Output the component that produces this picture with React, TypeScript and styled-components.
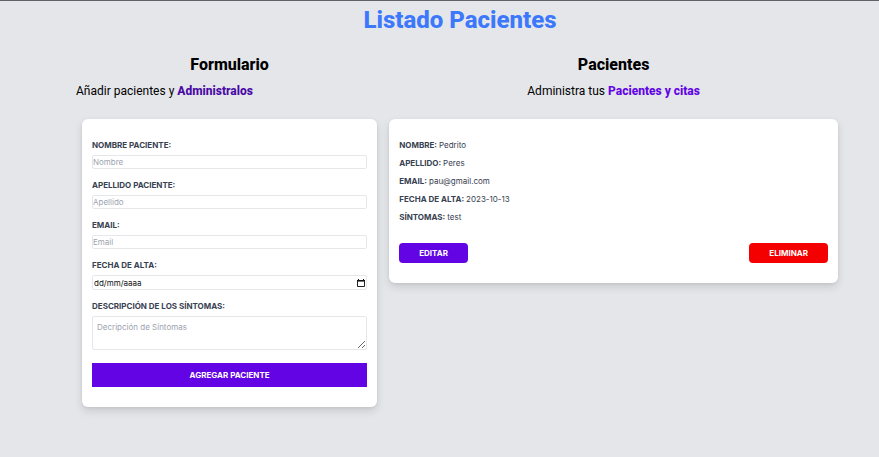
import React from "react";
import styled, { createGlobalStyle } from "styled-components";

const violet = "#6204e4";

const GlobalStyle = createGlobalStyle`
  *, *::before, *::after { box-sizing: border-box; }
  body {
    margin: 0;
    background: #e5e6ea;
    color: #000;
    font-family: Inter, "Liberation Sans", sans-serif;
    font-size: 8px;
    line-height: 12px;
  }
  h1, h2, p, dl, dd { margin: 0; }
  button, input, textarea { font: inherit; color: inherit; }
`;

const Page = styled.div`
  min-height: 100vh;
  border-top: 1px solid #5f6068;
  padding: 4px 0 48px 41px;
`;

const Container = styled.div`
  max-width: 768px;
  margin: 0 auto;
`;

const Title = styled.h1`
  font-family: Roboto, sans-serif;
  font-size: 24px;
  line-height: 30px;
  font-weight: 800;
  text-align: center;
  color: #3c78fb;
`;

const Columns = styled.main`
  display: grid;
  grid-template-columns: 2fr 3fr;
  align-items: start;
  margin-top: 18px;
`;

const Heading = styled.h2`
  font-family: Roboto, sans-serif;
  font-size: 16px;
  line-height: 24px;
  font-weight: 800;
  text-align: center;
`;

const Lead = styled.p<{ $align: "left" | "center" }>`
  margin: 4px 0 18px;
  font-family: Roboto, sans-serif;
  font-size: 12px;
  line-height: 20px;
  text-align: ${(p) => p.$align};
`;

const Accent = styled.strong<{ $color: string }>`
  font-weight: 800;
  color: ${(p) => p.$color};
`;

const cardShadow = "0 4px 8px rgba(0, 0, 0, 0.12), 0 1px 3px rgba(0, 0, 0, 0.06)";

const FormCard = styled.form`
  margin: 0 6px;
  padding: 20px 10px;
  background: #fff;
  border-radius: 6px;
  box-shadow: ${cardShadow};
`;

const PatientCard = styled.article`
  margin: 0 6px;
  padding: 20px 10px;
  background: #fff;
  border-radius: 6px;
  box-shadow: ${cardShadow};
`;

const Field = styled.div`
  display: flex;
  flex-direction: column;
  gap: 4px;
  margin-bottom: 10px;
`;

const Label = styled.label`
  font-weight: 700;
  text-transform: uppercase;
  color: #374151;
`;

const TextInput = styled.input`
  width: 100%;
  height: 14px;
  padding: 0;
  border: 1px solid #e5e7eb;
  border-radius: 2px;
  background: #fff;
  &::placeholder { color: #9ca3af; opacity: 1; }
`;

const DateBox = styled.div`
  display: flex;
  align-items: center;
  height: 15px;
  padding: 0 1px;
  border: 1px solid #e5e7eb;
  border-radius: 2px;
`;

const DateInput = styled.input`
  flex: 1;
  min-width: 0;
  height: 12px;
  padding: 0;
  border: 0;
  background: transparent;
  &::placeholder { color: #111; opacity: 1; }
`;

const PickerButton = styled.button`
  display: flex;
  padding: 0;
  border: 0;
  background: transparent;
`;

const TextArea = styled.textarea`
  display: block;
  width: 100%;
  height: 34px;
  padding: 4px;
  border: 1px solid #e5e7eb;
  border-radius: 2px;
  resize: vertical;
  overflow: hidden;
  &::placeholder { color: #9ca3af; opacity: 1; }
`;

const SubmitButton = styled.button`
  width: 100%;
  height: 24px;
  margin-top: 3px;
  padding: 0;
  border: 0;
  background: ${violet};
  color: #fff;
  font-weight: 700;
  text-transform: uppercase;
`;

const Details = styled.dl`
  display: grid;
  gap: 6px;
`;

const Detail = styled.div`
  display: flex;
  gap: 2px;
  color: #374151;
  dt { font-weight: 700; text-transform: uppercase; }
`;

const Actions = styled.div`
  display: flex;
  justify-content: space-between;
  margin-top: 20px;
`;

const ActionButton = styled.button<{ $color: string }>`
  height: 20px;
  padding: 0 20px;
  border: 0;
  border-radius: 4px;
  background: ${(p) => p.$color};
  color: #fff;
  font-weight: 700;
  text-transform: uppercase;
`;

const CalendarIcon = () => (
  <svg width="8" height="8" viewBox="0 0 8 8" aria-hidden="true">
    <path d="M0.5 1.5h7v6h-7z" fill="none" stroke="#222" />
    <path d="M0 1h8v1H0zM1 0h1v1H1zM6 0h1v1H6z" fill="#111" />
    <path d="M1 2h6v1H1z" fill="#777" />
  </svg>
);

const textFields = [
  { id: "nombre", label: "Nombre Paciente:", placeholder: "Nombre", type: "text" },
  { id: "apellido", label: "Apellido Paciente:", placeholder: "Apellido", type: "text" },
  { id: "email", label: "Email:", placeholder: "Email", type: "email" },
];

const patient = [
  ["Nombre:", "Pedrito"],
  ["Apellido:", "Peres"],
  ["Email:", "pau@gmail.com"],
  ["Fecha de alta:", "2023-10-13"],
  ["Síntomas:", "test"],
];

export default function App() {
  return (
    <>
      <GlobalStyle />
      <Page>
        <Container>
          <Title>Listado Pacientes</Title>
          <Columns>
            <section>
              <Heading>Formulario</Heading>
              <Lead $align="left">
                Añadir pacientes y <Accent $color="#4a0aa6">Administralos</Accent>
              </Lead>
              <FormCard onSubmit={(e) => e.preventDefault()}>
                {textFields.map((f) => (
                  <Field key={f.id}>
                    <Label htmlFor={f.id}>{f.label}</Label>
                    <TextInput id={f.id} type={f.type} placeholder={f.placeholder} />
                  </Field>
                ))}
                <Field>
                  <Label htmlFor="alta">Fecha de alta:</Label>
                  <DateBox>
                    <DateInput id="alta" type="text" inputMode="numeric" placeholder="dd/mm/aaaa" />
                    <PickerButton type="button" aria-label="Abrir calendario">
                      <CalendarIcon />
                    </PickerButton>
                  </DateBox>
                </Field>
                <Field>
                  <Label htmlFor="sintomas">Descripción de los síntomas:</Label>
                  <TextArea id="sintomas" placeholder="Decripción de Síntomas" />
                </Field>
                <SubmitButton type="submit">Agregar paciente</SubmitButton>
              </FormCard>
            </section>
            <section>
              <Heading>Pacientes</Heading>
              <Lead $align="center">
                Administra tus <Accent $color={violet}>Pacientes y citas</Accent>
              </Lead>
              <PatientCard>
                <Details>
                  {patient.map(([name, value]) => (
                    <Detail key={name}>
                      <dt>{name}</dt>
                      <dd>{value}</dd>
                    </Detail>
                  ))}
                </Details>
                <Actions>
                  <ActionButton type="button" $color={violet}>Editar</ActionButton>
                  <ActionButton type="button" $color="#f40000">Eliminar</ActionButton>
                </Actions>
              </PatientCard>
            </section>
          </Columns>
        </Container>
      </Page>
    </>
  );
}
